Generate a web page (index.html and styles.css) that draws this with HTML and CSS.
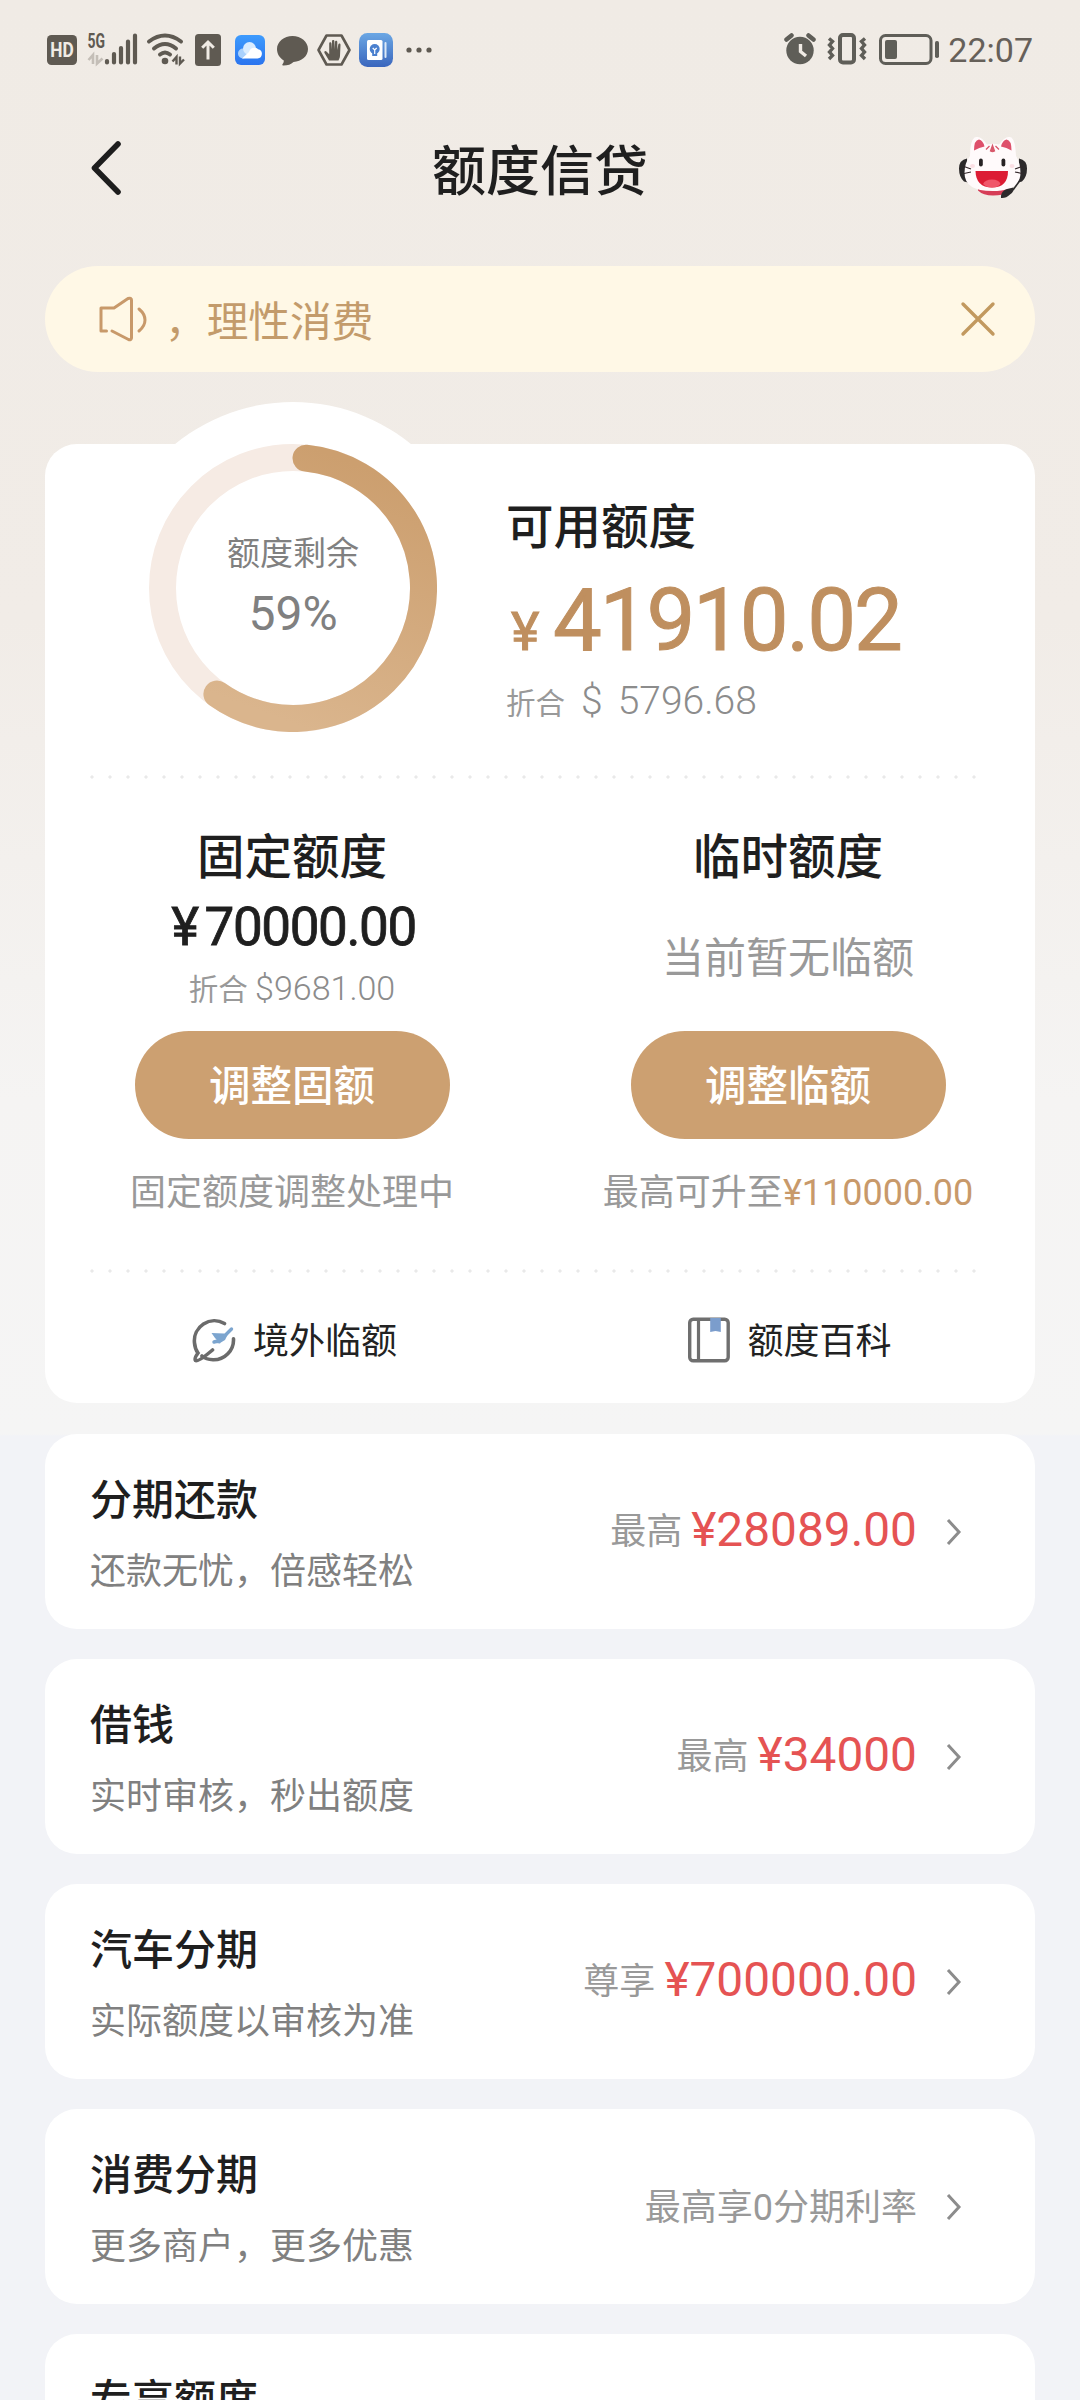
FILE: index.html
```html
<!DOCTYPE html>
<html lang="zh-CN">
<head>
<meta charset="utf-8">
<title>额度信贷</title>
<link rel="stylesheet" href="styles.css">
</head>
<body>
<div class="page">
  <div class="statusbar">
    <div class="status-left">
      <svg viewBox="47 25 138 50" width="138" height="50">
        <rect x="47" y="35" width="30" height="30" rx="4.500" fill="#5f5a52"/>
        <text x="62" y="57" class="st-hd" textLength="23.500" lengthAdjust="spacingAndGlyphs">HD</text>
        <text x="87.500" y="48" class="st-5g" textLength="17.500" lengthAdjust="spacingAndGlyphs">5G</text>
        <path d="M93 64V55L88.500 60M97 55v8.500l5.500-5" fill="none" stroke="#c4beb7" stroke-width="2.600"/>
        <path d="M107 61v1.500M114 54v8.500M121 48v14.500M128 41.500v21M135 35.500v27" stroke="#5f5a52" stroke-width="4.200" stroke-linecap="round"/>
        <g fill="none" stroke="#5f5a52" stroke-width="4" stroke-linecap="round">
          <path d="M149 41.500Q165 29.500 181 41.500"/>
          <path d="M154 48.500Q165 39.500 176 48.500"/>
          <path d="M160 54.500Q165 50.500 170 54.500"/>
        </g>
        <circle cx="165" cy="61" r="3.300" fill="#5f5a52"/>
        <path d="M176.500 64.500V57L172.500 61.500M180 56.500v7l4-4" fill="none" stroke="#5f5a52" stroke-width="2.400"/>
      </svg>
      <svg class="i-upload" viewBox="0 0 26 32" width="26" height="32">
        <rect width="26" height="32" rx="3.500" fill="#5f5a52"/>
        <path d="M13 25.500V8.500M7.200 13.800L13 8l5.800 5.800" fill="none" stroke="#f0ebe5" stroke-width="3"/>
      </svg>
      <svg class="i-cloud" viewBox="0 0 30 30" width="30" height="30">
        <defs><linearGradient id="cl" x1="0" y1="0" x2="0" y2="1"><stop offset="0" stop-color="#3d9bfd"/><stop offset="1" stop-color="#2b74ee"/></linearGradient></defs>
        <rect width="30" height="30" rx="6" fill="url(#cl)"/>
        <circle cx="8" cy="18.500" r="5" fill="#a9d1fd"/>
        <circle cx="14.500" cy="13.500" r="6.500" fill="#d9ecff"/>
        <path d="M7 23.500h15.500a4.700 4.700 0 0 0 .6-9.300A5.500 5.500 0 0 0 14 17z" fill="#fff"/>
      </svg>
      <svg class="i-bubble" viewBox="0 0 31 31" width="31" height="31">
        <path d="M15.500 1C24 1 31 6.800 31 14s-6.500 12.600-14.500 13C14 29.500 10.500 30.600 6 30.500c-.7 0-1-.7-.5-1.200 1-1.200 1.300-2.600 1.300-3.800C2.700 23 0 19 0 14 0 6.800 7 1 15.500 1z" fill="#5f5a52"/>
      </svg>
      <svg class="i-hex" viewBox="0 0 34 32" width="34" height="32">
        <path d="M9.500 1.500h15L32.500 16l-8 14.500h-15L1.500 16z" fill="none" stroke="#5f5a52" stroke-width="2.600" stroke-linejoin="round"/>
        <path d="M12 26.500L7.500 19c-.8-1.600 1-2.600 2.200-1.300l2.500 2.600V9.500c0-1.700 2.100-1.700 2.300 0l.5 6V7.500c0-1.900 2.400-1.900 2.400 0v8l.6-7.500c.2-1.700 2.300-1.600 2.300.1v8l1-5.600c.4-1.600 2.300-1.200 2.200.4L23 22c-.2 2-1 3.300-1.500 4.500z" fill="#5f5a52"/>
      </svg>
      <svg class="i-app" viewBox="0 0 34 34" width="34" height="34">
        <defs><linearGradient id="ap" x1="0" y1="0" x2="0" y2="1"><stop offset="0" stop-color="#6ba7e4"/><stop offset="1" stop-color="#3a66bd"/></linearGradient></defs>
        <rect width="34" height="34" rx="8.500" fill="url(#ap)"/>
        <rect x="8" y="7" width="15.500" height="20" rx="1.500" fill="#fff"/>
        <rect x="25.500" y="9" width="2" height="16" rx="1" fill="#dce9f8"/>
        <circle cx="15.700" cy="16" r="5" fill="#4a80cf"/>
        <rect x="13.200" y="20" width="5" height="3" fill="#4a80cf"/>
        <path d="M13.700 15l2 2 2-2M15.700 17v4" stroke="#fff" stroke-width="1.200" fill="none"/>
      </svg>
      <svg class="i-more" viewBox="0 0 26 6" width="26" height="6"><g fill="#5f5a52"><circle cx="3" cy="3" r="2.600"/><circle cx="13" cy="3" r="2.600"/><circle cx="23" cy="3" r="2.600"/></g></svg>
    </div>
    <div class="status-right">
      <svg viewBox="784 33 155 32" width="155" height="32">
        <circle cx="800" cy="50.500" r="13.700" fill="#5f5e58"/>
        <path d="M786.500 39.500l5-4M813.500 39.500l-5-4" stroke="#5f5e58" stroke-width="4.500" stroke-linecap="round"/>
        <path d="M800.500 44v7.500l5.500 4.500" fill="none" stroke="#f0ebe5" stroke-width="3.400"/>
        <rect x="840" y="35" width="14" height="27.500" rx="3" fill="none" stroke="#5f5e58" stroke-width="4"/>
        <path d="M829 38.500l3.500 3-3 3.500 3 3.500-3 3.500 3 3.500-3.500 3.500M865 38.500l-3.500 3 3 3.500-3 3.500 3 3.500-3 3.500 3.500 3.500" fill="none" stroke="#5f5e58" stroke-width="3.400"/>
        <rect x="880.500" y="35.500" width="50.500" height="28" rx="5" fill="none" stroke="#5f5e58" stroke-width="3"/>
        <rect x="885" y="40" width="12" height="19" rx="2" fill="#5f5e58"/>
        <rect x="935" y="41" width="4" height="17" rx="1.800" fill="#5f5e58"/>
      </svg>
      <span class="clock">22:07</span>
    </div>
  </div>

  <div class="header">
    <svg class="back" viewBox="0 0 30 54" width="30" height="54"><path d="M27 3L3.500 27 27 51" fill="none" stroke="#1d1d1d" stroke-width="5.600" stroke-linecap="round" stroke-linejoin="round"/></svg>
    <h1 class="title">额度信贷</h1>
    <svg class="cat" viewBox="959 137 68 62" width="68" height="62">
      <path d="M967 158.500q-8 1.500-8 10t5 13l4 1zM1019 158.500q8 1.500 8 10t-5 13l-4 1z" fill="#2c2a2b"/>
      <path d="M978 187h31v5q-6 3.500-16 3.500t-15-5z" fill="#d63d57"/>
      <path d="M970 156q0-15 4.500-18.500 6-2.500 12.500 7 6-1.500 12 0 7-9.500 12.500-7 4 3.500 4.500 18.500 4.500 7 4.500 17 0 18-28 18t-28-18q0-10 5.500-17z" fill="#fffafb"/>
      <path d="M974 150.500q0-10.500 5-11 4 .8 5.500 7-5 1.200-10.500 4zM1011.500 150.500q0-10.500-5-11-4 .8-5.500 7 5.500 1.200 10.500 4z" fill="#de506b"/>
      <path d="M992.500 145.500l2 5.500q-2 1-4 0zM989.500 146l-3.500 3.500M995.500 146l3.500 3.500" fill="#d8586b" stroke="#d8586b" stroke-width="1.300"/>
      <rect x="979" y="158.500" width="3.800" height="8" rx="1.900" fill="#272324"/>
      <rect x="1001.500" y="158.500" width="3.800" height="8" rx="1.900" fill="#272324"/>
      <ellipse cx="972.500" cy="166" rx="2.500" ry="2" fill="#fbdfe4"/>
      <ellipse cx="1012" cy="166" rx="2.500" ry="2" fill="#fbdfe4"/>
      <path d="M975.500 171h32.500q0 16.500-16 16.500T975.500 171z" fill="#dc1c34"/>
      <path d="M983 184q2-4.500 9-4.500t8.500 4.500q-3 3.500-8.500 3.500T983 184z" fill="#f0566a"/>
      <path d="M964 166.500l7 2.500M964 173.500l7-1.500M1022 166.500l-7 2.500M1022 173.500l-7-1.500" stroke="#34282b" stroke-width="1.200"/>
      <path d="M1021 179l-8 11" stroke="#2c2a2b" stroke-width="1.600"/>
      <path d="M1001 195.500q1-5 6-6.500l6.500-1.500q1 4-3.500 7-4 4-9 3.500z" fill="#2c2a2b"/>
    </svg>
  </div>

  <div class="notice">
    <svg class="speaker" viewBox="99 296 48 46" width="48" height="46" fill="none" stroke="#c8996a" stroke-width="3" stroke-linecap="round" stroke-linejoin="round">
      <path d="M106.500 331h-5.500v-23h13l14-9.500q3.500-1 3.500 1.500v38q-.5 2.500-3 1.500L112 331"/>
      <path d="M139 309q6 5 6 11t-6 11"/>
    </svg>
    <span class="notice-text">，理性消费</span>
    <svg class="close" viewBox="0 0 36 36" width="36" height="36"><path d="M3 3l30 30M33 3L3 33" stroke="#c2995f" stroke-width="3.400" stroke-linecap="round"/></svg>
  </div>

  <div class="card quota">
    <div class="bump"></div>
    <div class="summary">
      <div class="ring">
        <svg class="ring-svg" viewBox="0 0 288 288" width="288" height="288">
          <defs><linearGradient id="rg" x1=".6" y1="0" x2=".3" y2="1"><stop offset="0" stop-color="#cc9f6f"/><stop offset="1" stop-color="#dab58d"/></linearGradient></defs>
          <circle cx="144" cy="144" r="130.500" fill="none" stroke="#f6ebe4" stroke-width="27"/>
          <path d="M157 14.150A130.500 130.500 0 1 1 67.900 250" fill="none" stroke="url(#rg)" stroke-width="27" stroke-linecap="round"/>
        </svg>
        <div class="ring-text">
          <span class="ring-label">额度剩余</span>
          <span class="ring-value">59%</span>
        </div>
      </div>
      <div class="available">
        <div class="avail-title">可用额度</div>
        <div class="avail-amount"><span class="avail-cur">¥</span><span class="avail-num">41910.02</span></div>
        <div class="avail-sub"><span class="zh">折合</span><span class="usd">$</span><span class="usd-num">5796.68</span></div>
      </div>
    </div>
    <div class="dots"></div>
    <div class="columns">
      <div class="col">
        <div class="col-title">固定额度</div>
        <div class="col-amount"><span class="cur">¥</span>70000.00</div>
        <div class="col-sub">折合 <span class="col-usd">$9681.00</span></div>
        <div class="btn">调整固额</div>
        <div class="caption">固定额度调整处理中</div>
      </div>
      <div class="col">
        <div class="col-title">临时额度</div>
        <div class="col-empty">当前暂无临额</div>
        <div class="btn">调整临额</div>
        <div class="caption">最高可升至<span class="gold">¥110000.00</span></div>
      </div>
    </div>
    <div class="dots"></div>
    <div class="links">
      <div class="link">
        <svg viewBox="192 1315 44 46" width="44" height="46">
          <path d="M224.500 1321.500A20 20 0 0 0 194.500 1341q.5 6 3.500 10-4 5.500-2.500 7.500 3 1.500 17-10.500M202 1354q4 3.500 11 3.800a20 20 0 0 0 20.500-21" fill="none" stroke="#6b6b6b" stroke-width="3.600" stroke-linecap="round"/>
          <path d="M214 1340l6-1.500L231.500 1327" fill="none" stroke="#7ca5cf" stroke-width="3.400" stroke-linecap="round" stroke-linejoin="round"/>
          <path d="M211.500 1331l12.500.5 3.500 1.500-2.500 5-5 3-5-5zM225 1334l-5 7.500-4-.5 4-6z" fill="#7ca5cf"/>
        </svg>
        <span>境外临额</span>
      </div>
      <div class="link">
        <svg class="book" viewBox="0 0 42 46" width="42" height="46">
          <rect x="1.700" y="2.200" width="38.500" height="41.500" rx="3.500" fill="none" stroke="#6f6f6f" stroke-width="3.400"/>
          <path d="M10.500 2v42" stroke="#6f6f6f" stroke-width="3.200"/>
          <path d="M22.200 1h10.600v14l-5.300-1-5.300 1z" fill="#7b9dcc"/>
        </svg>
        <span>额度百科</span>
      </div>
    </div>
  </div>

  <div class="card item">
    <div class="item-text"><div class="item-title">分期还款</div><div class="item-sub">还款无忧，倍感轻松</div></div>
    <div class="item-right"><span class="tag">最高</span><span class="money">¥28089.00</span></div>
    <svg class="chev" viewBox="0 0 16 28" width="16" height="28"><path d="M2 2l11 12L2 26" fill="none" stroke="#8c8c8c" stroke-width="3"/></svg>
  </div>
  <div class="card item">
    <div class="item-text"><div class="item-title">借钱</div><div class="item-sub">实时审核，秒出额度</div></div>
    <div class="item-right"><span class="tag">最高</span><span class="money">¥34000</span></div>
    <svg class="chev" viewBox="0 0 16 28" width="16" height="28"><path d="M2 2l11 12L2 26" fill="none" stroke="#8c8c8c" stroke-width="3"/></svg>
  </div>
  <div class="card item">
    <div class="item-text"><div class="item-title">汽车分期</div><div class="item-sub">实际额度以审核为准</div></div>
    <div class="item-right"><span class="tag">尊享</span><span class="money">¥700000.00</span></div>
    <svg class="chev" viewBox="0 0 16 28" width="16" height="28"><path d="M2 2l11 12L2 26" fill="none" stroke="#8c8c8c" stroke-width="3"/></svg>
  </div>
  <div class="card item">
    <div class="item-text"><div class="item-title">消费分期</div><div class="item-sub">更多商户，更多优惠</div></div>
    <div class="item-right note"><span>最高享0分期利率</span></div>
    <svg class="chev" viewBox="0 0 16 28" width="16" height="28"><path d="M2 2l11 12L2 26" fill="none" stroke="#8c8c8c" stroke-width="3"/></svg>
  </div>
  <div class="card item">
    <div class="item-text"><div class="item-title">专享额度</div></div>
  </div>
</div>
</body>
</html>
```
FILE: styles.css
```css
* { box-sizing: border-box; }
body {
  margin: 0;
  font-family: Roboto, "Noto Sans CJK SC", sans-serif;
  color: #1f1f1f;
}
.page {
  width: 1080px;
  height: 2400px;
  overflow: hidden;
  background: linear-gradient(#f0ebe5 0, #f1ece7 620px, #f5f4f3 1100px, #f5f5f5 1434px, #f2f3f7 1436px, #f2f3f7 100%);
}
svg { display: block; flex: none; }

/* status bar */
.statusbar {
  display: flex;
  justify-content: space-between;
  height: 100px;
  padding: 0 47px;
}
.status-left, .status-right { display: flex; align-items: center; height: 100px; }
.status-right { height: 98px; }
.st-hd { font: 700 20px Roboto, sans-serif; fill: #f0ebe5; text-anchor: middle; }
.st-5g { font: 700 20px Roboto, sans-serif; fill: #5f5a52; }
.i-upload { margin-left: 10px; }
.i-cloud { margin-left: 14px; }
.i-bubble { margin-left: 12px; }
.i-hex { margin-left: 9px; }
.i-app { margin-left: 8px; }
.i-more { margin-left: 13px; }
.clock { margin-left: 9px; font-size: 34px; line-height: 40px; color: #666059; padding-top: 2px; }

/* header */
.header {
  display: grid;
  grid-template-columns: 120px 1fr 120px;
  align-items: center;
  height: 140px;
  padding: 0 53px 0 91px;
  margin-bottom: 26px;
}
.title {
  margin: 0;
  padding: 5px 38px 0 0;
  text-align: center;
  font-size: 54px;
  font-weight: 500;
  line-height: 64px;
}
.header .back { margin-bottom: 4px; }
.cat { justify-self: end; margin-bottom: 4px; }

/* notice */
.notice {
  display: flex;
  align-items: center;
  height: 106px;
  margin: 0 45px 72px;
  padding: 0 39px 0 54px;
  border-radius: 53px;
  background: #fff8e6;
}
.notice-text { flex: 1; margin-left: 18px; font-size: 41.700px; line-height: 50px; color: #c39b6b; padding-top: 7px; }

/* cards */
.card { margin: 0 45px 30px; border-radius: 32px; background: #fff; }
.quota { position: relative; height: 959px; margin-bottom: 31px; }
.bump {
  position: absolute;
  left: 62px;
  top: -42px;
  width: 372px;
  height: 372px;
  border-radius: 50%;
  background: #fff;
}
.summary { position: relative; display: flex; height: 331px; padding-left: 104px; }
.ring { display: grid; width: 288px; height: 288px; }
.ring-svg, .ring-text { grid-area: 1 / 1; }
.ring-text { display: flex; flex-direction: column; align-items: center; padding-top: 88px; color: #808080; }
.ring-label { font-size: 33px; line-height: 44px; }
.ring-value { font-size: 48px; line-height: 56px; margin-top: 10px; }
.available { margin-left: 69px; }
.avail-title { margin-top: 55px; font-size: 47.500px; line-height: 58px; font-weight: 500; }
.avail-amount { display: flex; align-items: baseline; margin-top: 18px; height: 90px; line-height: 90px; color: #bf8f5f; -webkit-text-stroke: 1px currentColor; }
.avail-cur { width: 47px; padding-left: 5px; font-size: 54px; }
.avail-num { font-size: 87px; letter-spacing: -2.200px; }
.avail-sub { display: flex; align-items: baseline; margin-top: 14px; line-height: 44px; font-size: 39px; color: #999; }
.avail-sub .zh { font-size: 29.500px; }
.usd, .usd-num { font-weight: 300; color: #8c8c8c; }
.usd { margin-left: 16px; }
.usd-num { margin-left: 15px; }

.dots {
  height: 4px;
  margin: 0 45px;
  background: radial-gradient(circle at 2px 2px, #e9e9e9 1.300px, transparent 1.900px) 0 0 / 18px 4px repeat-x;
}
.columns { display: flex; height: 490px; }
.col { flex: 1; display: flex; flex-direction: column; align-items: center; padding-top: 50px; }
.col:first-child { padding-right: 2px; }
.col-title { font-size: 47.500px; line-height: 58px; font-weight: 500; }
.col-amount { margin-top: 12px; padding-left: 3px; font-size: 53px; line-height: 56px; letter-spacing: -1.400px; -webkit-text-stroke: .8px currentColor; }
.cur { margin-right: 7px; }
.col-sub { margin-top: 11px; font-size: 29.500px; line-height: 44px; color: #999; }
.col-usd { font-size: 34px; font-weight: 300; color: #8c8c8c; }
.col-empty { height: 102px; margin-top: 47px; margin-bottom: -5px; font-size: 42px; line-height: 50px; color: #999; }
.btn {
  width: 315px;
  height: 108px;
  margin-top: 19px;
  border-radius: 54px;
  background: #cca071;
  color: #fff;
  font-size: 41.500px;
  line-height: 112px;
  font-weight: 500;
  text-align: center;
}
.col-empty + .btn { margin-top: 0; }
.caption { margin-top: 31px; font-size: 36px; line-height: 46px; color: #999; white-space: nowrap; }
.gold { color: #c8996a; }
.links { display: flex; padding-top: 42px; }
.link { flex: 1; display: flex; align-items: center; gap: 17px; padding-left: 147px; font-size: 36px; line-height: 46px; color: #222; }
.link span { padding-top: 4px; }
.link + .link { padding-left: 148px; gap: 18px; }

/* list items */
.item { display: flex; align-items: center; height: 195px; padding: 0 73px 0 45px; }
.item-text { flex: 1; align-self: flex-start; padding-top: 41px; }
.item-title { font-size: 42px; line-height: 52px; font-weight: 500; }
.item-sub { margin-top: 22px; font-size: 36px; line-height: 46px; color: #808080; }
.item-right { display: flex; align-items: baseline; gap: 9px; font-size: 36px; line-height: 54px; color: #999; }
.tag { position: relative; top: -2px; }
.note { padding-top: 3px; }
.money { padding-top: 1px; font-size: 47.800px; color: #e55353; }
.chev { margin-left: 29px; }
```
